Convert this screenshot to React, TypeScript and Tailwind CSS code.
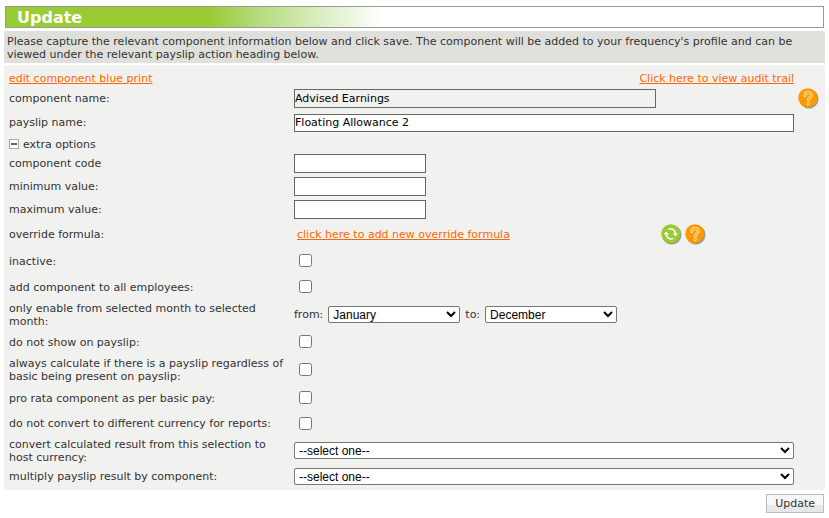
import { useState, type ReactNode } from "react";
import { clsx } from "clsx";

const MONTHS = [
  "January",
  "February",
  "March",
  "April",
  "May",
  "June",
  "July",
  "August",
  "September",
  "October",
  "November",
  "December",
];

const inputClass = "block border border-[#666666] px-0 text-black outline-none";
const selectClass =
  "block h-[17px] rounded-xs border border-[#767676] bg-white px-0 font-['Liberation_Sans',Arial,sans-serif] text-xs leading-[15px] text-black";
const linkClass = "text-[#ff6600] underline";

function HelpIcon() {
  return (
    <svg width="21" height="21" viewBox="0 0 21 21" aria-hidden="true">
      <circle cx="11" cy="11" r="9.7" fill="#8a8a8a" opacity="0.45" />
      <circle cx="10.6" cy="10.6" r="9.7" fill="#777777" opacity="0.6" />
      <circle cx="9.8" cy="9.8" r="9.6" fill="#ff9900" />
      <path
        d="M6.9 7.6C6.9 5.5 8.2 4.4 10 4.4s3.1 1.1 3.1 2.9c0 2.2-2.7 2.4-2.7 4.7"
        fill="none"
        stroke="#ffdca0"
        strokeWidth="3.2"
        strokeLinecap="round"
      />
      <path
        d="M6.9 7.6C6.9 5.5 8.2 4.4 10 4.4s3.1 1.1 3.1 2.9c0 2.2-2.7 2.4-2.7 4.7"
        fill="none"
        stroke="#ffa21a"
        strokeWidth="1.2"
        strokeLinecap="round"
      />
      <circle cx="10.2" cy="15.4" r="1.3" fill="#ffa21a" stroke="#ffdca0" strokeWidth="1" />
    </svg>
  );
}

function RefreshIcon() {
  return (
    <svg width="21" height="21" viewBox="0 0 21 21" aria-hidden="true">
      <circle cx="11" cy="11" r="9.7" fill="#8a8a8a" opacity="0.45" />
      <circle cx="10.6" cy="10.6" r="9.7" fill="#777777" opacity="0.6" />
      <circle cx="9.8" cy="9.8" r="9.6" fill="#99cc33" />
      <path
        d="M7.2 5.4c3.3-1.6 6.9.1 7.1 4M12.4 14.4c-3.3 1.6-6.9-.1-7.1-4"
        fill="none"
        stroke="#ffffff"
        strokeWidth="1.5"
      />
      <path d="M11.8 9.2h5.2l-2.6 3.2zM2.6 10.6h5.2L5.2 7.4z" fill="#ffffff" />
    </svg>
  );
}

function Row({
  label,
  htmlFor,
  className,
  aside,
  children,
}: {
  label: string;
  htmlFor?: string;
  className: string;
  aside?: ReactNode;
  children?: ReactNode;
}) {
  return (
    <div className={clsx("flex items-center", className)}>
      <div className="w-[285px] shrink-0 pr-1">
        {htmlFor ? <label htmlFor={htmlFor}>{label}</label> : label}
      </div>
      <div className="min-w-0 flex-1">{children}</div>
      <div className="w-[31px] shrink-0 pl-1">{aside}</div>
    </div>
  );
}

function CheckRow({ id, label, className }: { id: string; label: string; className: string }) {
  return (
    <Row label={label} htmlFor={id} className={className}>
      <input id={id} type="checkbox" className="mb-px ml-[5px] block size-[13px]" />
    </Row>
  );
}

function SelectOneRow({ id, label, className }: { id: string; label: string; className: string }) {
  return (
    <Row label={label} htmlFor={id} className={className}>
      <select id={id} className={clsx(selectClass, "w-full")}>
        <option>--select one--</option>
      </select>
    </Row>
  );
}

function MonthSelect({ id, initial }: { id: string; initial: string }) {
  return (
    <select id={id} defaultValue={initial} className={clsx(selectClass, "w-[132px]")}>
      {MONTHS.map((month) => (
        <option key={month}>{month}</option>
      ))}
    </select>
  );
}

export default function App() {
  const [open, setOpen] = useState(true);

  return (
    <form
      onSubmit={(e) => e.preventDefault()}
      className="bg-white px-1 pt-1.5 font-['DejaVu_Sans',Verdana,sans-serif] text-[11px] leading-[13px] text-[#333333]"
    >
      <h1 className="mr-px ml-px border border-[#999999] bg-linear-to-r from-[#99cc33] from-25% to-white to-46% pt-0.5 pl-[11px] text-base leading-[18px] font-bold text-white">
        Update
      </h1>

      <p className="mt-[3px] bg-[#dfe0db] px-[3px] pt-1 pb-[2px]">
        Please capture the relevant component information below and click save. The component will be
        added to your frequency's profile and can be viewed under the relevant payslip action heading
        below.
      </p>

      <div className="mt-[2px] bg-[#f1f1f0] pb-[2px] pl-[5px]">
        <div className="flex h-[23px] items-center justify-between pt-[3px] pr-[31px]">
          <a href="#blueprint" className={linkClass}>
            edit component blue print
          </a>
          <a href="#audit" className={linkClass}>
            Click here to view audit trail
          </a>
        </div>

        <Row
          label="component name:"
          htmlFor="component-name"
          className="h-[21px]"
          aside={
            <button type="button" aria-label="Help" className="block">
              <HelpIcon />
            </button>
          }
        >
          <input
            id="component-name"
            readOnly
            value="Advised Earnings"
            className={clsx(inputClass, "h-[19px] w-[362px] bg-[#f1f1f0]")}
          />
        </Row>
        <Row label="payslip name:" htmlFor="payslip-name" className="h-[27px]">
          <input
            id="payslip-name"
            defaultValue="Floating Allowance 2"
            className={clsx(inputClass, "h-[18px] w-full bg-white")}
          />
        </Row>

        <button
          type="button"
          aria-expanded={open}
          onClick={() => setOpen(!open)}
          className="flex h-4 items-center gap-1"
        >
          <svg width="10" height="10" viewBox="0 0 10 10" aria-hidden="true">
            <rect x="0.5" y="0.5" width="9" height="9" fill="#ffffff" stroke="#aca899" />
            <path d={open ? "M2 5h6" : "M2 5h6M5 2v6"} stroke="#666666" strokeWidth="2" />
          </svg>
          extra options
        </button>

        {open && (
          <>
            <Row label="component code" htmlFor="component-code" className="h-[23px]">
              <input id="component-code" className={clsx(inputClass, "h-[19px] w-[132px] bg-white")} />
            </Row>
            <Row label="minimum value:" htmlFor="minimum-value" className="h-[23px]">
              <input id="minimum-value" className={clsx(inputClass, "h-[19px] w-[132px] bg-white")} />
            </Row>
            <Row label="maximum value:" htmlFor="maximum-value" className="h-[23px]">
              <input id="maximum-value" className={clsx(inputClass, "h-[19px] w-[132px] bg-white")} />
            </Row>

            <Row label="override formula:" className="h-[27px]">
              <div className="flex items-center">
                <div className="w-[367px] pl-[3px]">
                  <a href="#override" className={linkClass}>
                    click here to add new override formula
                  </a>
                </div>
                <div className="flex gap-[3px]">
                  <button type="button" aria-label="Refresh" className="block">
                    <RefreshIcon />
                  </button>
                  <button type="button" aria-label="Help" className="block">
                    <HelpIcon />
                  </button>
                </div>
              </div>
            </Row>

            <CheckRow id="inactive" label="inactive:" className="h-[26px]" />
            <CheckRow id="all-employees" label="add component to all employees:" className="h-[26px]" />

            <Row label="only enable from selected month to selected month:" className="h-[29px]">
              <div className="flex items-center gap-[5px]">
                <label htmlFor="month-from">from:</label>
                <MonthSelect id="month-from" initial="January" />
                <label htmlFor="month-to">to:</label>
                <MonthSelect id="month-to" initial="December" />
              </div>
            </Row>

            <CheckRow id="hide-payslip" label="do not show on payslip:" className="h-[26px]" />
            <CheckRow
              id="always-calculate"
              label="always calculate if there is a payslip regardless of basic being present on payslip:"
              className="h-[30px]"
            />
            <CheckRow id="pro-rata" label="pro rata component as per basic pay:" className="h-[26px]" />
            <CheckRow
              id="no-convert"
              label="do not convert to different currency for reports:"
              className="h-[25px]"
            />
            <SelectOneRow
              id="convert-result"
              label="convert calculated result from this selection to host currency:"
              className="h-[29px]"
            />
            <SelectOneRow
              id="multiply-result"
              label="multiply payslip result by component:"
              className="h-[23px]"
            />
          </>
        )}
      </div>

      <div className="flex justify-end pt-1 pr-px pb-1">
        <button
          type="submit"
          className="h-[19px] border border-[#bbbbbb] bg-linear-to-b from-[#f7f7f7] from-60% to-[#e8e8e8] to-60% px-2"
        >
          Update
        </button>
      </div>
    </form>
  );
}
